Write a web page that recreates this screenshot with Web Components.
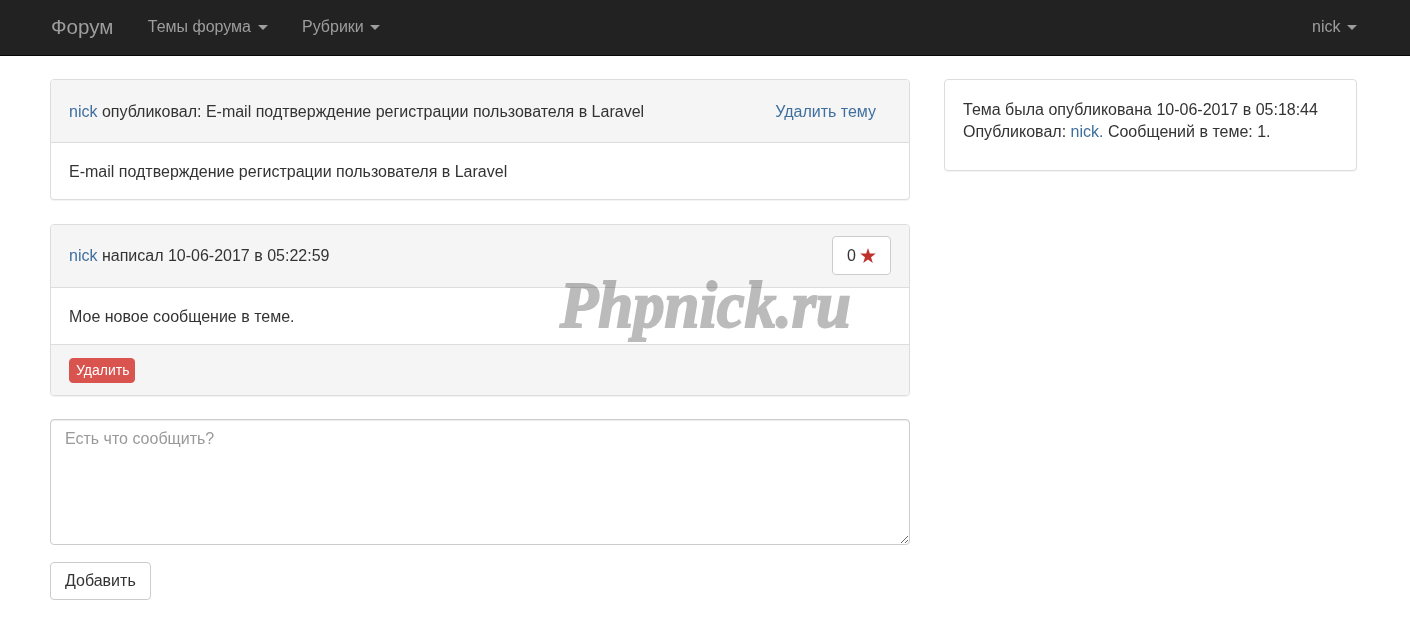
<!DOCTYPE html>
<html lang="ru">
<head>
<meta charset="utf-8">
<title>Форум</title>
<style>
  html, body { margin: 0; padding: 0; background: #fff; }
  body { font: 16px/22px "Liberation Sans", Arial, sans-serif; color: #333; }
</style>
</head>
<body>
<template id="tpl-navbar">
  <style>
    :host { display: flex; align-items: center; height: 55px; padding: 0 53px 0 51px; background: #222; border-bottom: 1px solid #080808; color: #9d9d9d; box-sizing: content-box; }
    .brand { font-size: 20.5px; margin-right: 34.5px; margin-top: -2px; }
  </style>
  <span class="brand">Форум</span>
  <nav-menu>Темы форума</nav-menu>
  <nav-menu>Рубрики</nav-menu>
  <nav-menu class="right">nick</nav-menu>
</template>

<template id="tpl-menu">
  <style>
    :host { display: inline-flex; align-items: center; margin-right: 34.5px; margin-top: -2px; }
    :host(.right) { margin-left: auto; margin-right: 0; }
    i { width: 0; height: 0; margin-left: 6.5px; margin-top: 2px; border-top: 5px solid #9d9d9d; border-left: 5px solid transparent; border-right: 5px solid transparent; }
  </style>
  <slot></slot><i></i>
</template>

<template id="tpl-panel">
  <style>
    :host { display: block; background: #fff; border: 1px solid #ddd; border-radius: 4px; box-shadow: 0 1px 1px rgba(0,0,0,.05); overflow: hidden; }
    .head { display: flex; align-items: center; justify-content: space-between; background: #f5f5f5; border-bottom: 1px solid #ddd; padding: var(--head-pad, 21px 18px 19px); }
    .body { padding: 18px 18px 16px; }
    .foot { background: #f5f5f5; border-top: 1px solid #ddd; padding: 13px 18px 12px; }
    .foot:not(.on) { display: none; }
  </style>
  <div class="head"><slot name="head"></slot></div>
  <div class="body"><slot></slot></div>
  <div class="foot"><slot name="foot"></slot></div>
</template>

<template id="tpl-watermark">
  <style>
    :host { position: absolute; left: 560px; top: 269px; font: italic bold 66px/72px "Liberation Serif", serif; color: #bbb; -webkit-text-stroke: 2px #bbb; mix-blend-mode: multiply; transform: scaleX(.95); transform-origin: left top; pointer-events: none; white-space: nowrap; }
  </style>
  <slot></slot>
</template>

<template id="tpl-page">
  <style>
    :host { display: grid; grid-template-columns: 860px 413px; column-gap: 34px; padding: 23px 53px 21px 50px; align-items: start; }
    .main { display: flex; flex-direction: column; }
    .p1 { margin-bottom: 24px; }
    .p2 { margin-bottom: 23px; }
    .del { margin-right: 15px; }
    .rate { display: flex; align-items: center; justify-content: center; gap: 4px; width: 59px; height: 39px; box-sizing: border-box; background: #fff; border: 1px solid #ccc; border-radius: 4px; }
    .rate svg { display: block; margin-top: -1px; }
    .danger { display: inline-block; background: #d9534f; border: 1px solid #d9534f; border-radius: 4px; color: #fff; font-size: 14px; line-height: 23px; padding: 0 6px 0 6px; width: 52px; white-space: nowrap; }
    .area { display: block; box-sizing: border-box; width: 860px; height: 126px; margin: 0 0 17px; padding: 8px 14px; border: 1px solid #ccc; border-radius: 4px; box-shadow: inset 0 1px 1px rgba(0,0,0,.075); font: inherit; color: #333; resize: vertical; outline: 0; }
    .area::placeholder { color: #999; opacity: 1; }
    .btn { align-self: flex-start; box-sizing: border-box; height: 38px; padding: 0 14px; background: #fff; border: 1px solid #ccc; border-radius: 4px; font: inherit; color: #333; }
    a { color: #3f6f9f; text-decoration: none; }
  </style>
  <div class="main">
    <forum-panel class="p1">
      <span slot="head"><a href="#">nick</a> опубликовал: E-mail подтверждение регистрации пользователя в Laravel</span>
      <a slot="head" class="del" href="#">Удалить тему</a>
      E-mail подтверждение регистрации пользователя в Laravel
    </forum-panel>
    <forum-panel class="p2" style="--head-pad: 11px 18px 12px" foot>
      <span slot="head"><a href="#">nick</a> написал 10-06-2017 в 05:22:59</span>
      <span slot="head" class="rate">0 <svg width="16" height="15" viewBox="0 0 24 23"><path fill="#c0302c" d="M12 0l2.8 8.6H24l-7.4 5.4 2.8 9-7.4-5.5-7.4 5.5 2.8-9L0 8.6h9.2z"/></svg></span>
      Мое новое сообщение в теме.
      <span slot="foot" class="danger">Удалить</span>
    </forum-panel>
    <textarea class="area" placeholder="Есть что сообщить?"></textarea>
    <button class="btn">Добавить</button>
  </div>
  <forum-side>
    Тема была опубликована 10-06-2017 в 05:18:44<br>
    Опубликовал: <a href="#">nick.</a> Сообщений в теме: 1.
  </forum-side>
</template>

<template id="tpl-side">
  <style>
    :host { display: block; background: #fff; border: 1px solid #ddd; border-radius: 4px; box-shadow: 0 1px 1px rgba(0,0,0,.05); padding: 19px 18px 27px; }
  </style>
  <slot></slot>
</template>

<forum-navbar></forum-navbar>
<forum-page></forum-page>
<forum-watermark>Phpnick.ru</forum-watermark>

<script>
function define(tag, tplId, setup) {
  customElements.define(tag, class extends HTMLElement {
    constructor() {
      super();
      this.shadow = this.attachShadow({ mode: "open" });
      this.shadow.appendChild(document.getElementById(tplId).content.cloneNode(true));
    }
    connectedCallback() {
      if (setup) setup(this);
    }
  });
}

define("nav-menu", "tpl-menu");
define("forum-navbar", "tpl-navbar");
define("forum-panel", "tpl-panel", (el) => {
  if (el.hasAttribute("foot")) el.shadow.querySelector(".foot").classList.add("on");
});
define("forum-side", "tpl-side");
define("forum-watermark", "tpl-watermark");
define("forum-page", "tpl-page");
</script>
</body>
</html>
